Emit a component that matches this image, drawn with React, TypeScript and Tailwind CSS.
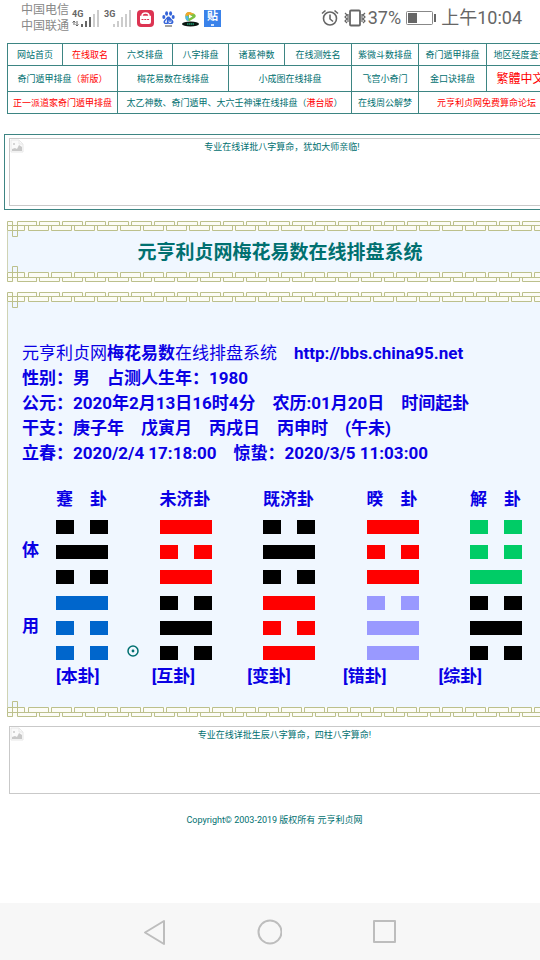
import React from "react";

type NavCell = { parts: { text: string; red?: boolean }[]; span?: number; large?: boolean };

const navRows: { height: string; cells: NavCell[] }[] = [
  {
    height: "h-[22px]",
    cells: [
      { parts: [{ text: "网站首页" }] },
      { parts: [{ text: "在线取名", red: true }] },
      { parts: [{ text: "六爻排盘" }] },
      { parts: [{ text: "八字排盘" }] },
      { parts: [{ text: "诸葛神数" }] },
      { parts: [{ text: "在线测姓名" }] },
      { parts: [{ text: "紫微斗数排盘" }] },
      { parts: [{ text: "奇门遁甲排盘" }] },
      { parts: [{ text: "地区经度查询" }] },
    ],
  },
  {
    height: "h-[26px]",
    cells: [
      { parts: [{ text: "奇门遁甲排盘" }, { text: "（新版）", red: true }], span: 2 },
      { parts: [{ text: "梅花易数在线排盘" }], span: 2 },
      { parts: [{ text: "小成图在线排盘" }], span: 2 },
      { parts: [{ text: "飞宫小奇门" }] },
      { parts: [{ text: "金口诀排盘" }] },
      { parts: [{ text: "繁體中文", red: true }], large: true },
    ],
  },
  {
    height: "h-[22px]",
    cells: [
      { parts: [{ text: "正一派道家奇门遁甲排盘", red: true }], span: 2 },
      {
        parts: [
          { text: "太乙神数、奇门遁甲、大六壬神课在线排盘（" },
          { text: "港台版", red: true },
          { text: "）" },
        ],
        span: 4,
      },
      { parts: [{ text: "在线周公解梦" }] },
      { parts: [{ text: "元亨利贞网免费算命论坛", red: true }], span: 2 },
    ],
  },
];

type Hexagram = { name: string; upper: string; lower: string; lines: string; moving?: boolean };

// Each line reads top to bottom: "1" is a solid line, "0" a broken one.
const hexagrams: Hexagram[] = [
  { name: "蹇　卦", upper: "bg-black", lower: "bg-[#0066cc]", lines: "010100", moving: true },
  { name: "未济卦", upper: "bg-[#ff0000]", lower: "bg-black", lines: "101010" },
  { name: "既济卦", upper: "bg-black", lower: "bg-[#ff0000]", lines: "010101" },
  { name: "暌　卦", upper: "bg-[#ff0000]", lower: "bg-[#9999ff]", lines: "101011" },
  { name: "解　卦", upper: "bg-[#00cc66]", lower: "bg-black", lines: "001010" },
];

const captions = ["[本卦]", "[互卦]", "[变卦]", "[错卦]", "[综卦]"];

function Line({ solid, color }: { solid: boolean; color: string }) {
  if (solid) return <div className={`h-[14px] w-full ${color}`} />;
  return (
    <div className="flex h-[14px] justify-between">
      <div className={`w-[18px] ${color}`} />
      <div className={`w-[18px] ${color}`} />
    </div>
  );
}

function Fret({ id, bottom }: { id: string; bottom?: boolean }) {
  return (
    <div className="h-[10px] bg-[#fcfcf6]">
      <svg
        className={`block h-[10px] w-full overflow-visible ${bottom ? "-scale-y-100" : ""}`}
        fill="none"
        stroke="#bcc08c"
        aria-hidden="true"
      >
        <defs>
          <pattern id={id} x="21" y="0" width="23" height="10" patternUnits="userSpaceOnUse">
            <path d="M11.5 .5h20v4h-20z M-11.5 .5h20v4h-20z M.5 4.5h20v5H.5z" />
          </pattern>
        </defs>
        <rect x="21" width="100%" height="10" fill={`url(#${id})`} stroke="none" />
        <path d="M21 .5h8.500v4H10.500 M.5 .5h5v4h-5z M10.500 .5H21 M.5 4.500v5h17v-5H.5 M5.500 .5v15h5V.500" />
      </svg>
    </div>
  );
}

function Panel({ id, children }: { id: string; children: React.ReactNode }) {
  return (
    <div className="ml-[7px] bg-[#f0f7ff]">
      <Fret id={`${id}-top`} />
      <div className="border-l border-[#cfd3b4]">{children}</div>
      <Fret id={`${id}-bottom`} bottom />
    </div>
  );
}

function MissingBanner({ text }: { text: string }) {
  return (
    <a
      href="#"
      className="grid h-[68px] grid-cols-[14px_1fr_14px] items-start border border-[#c9c9c9] text-center text-[9px] leading-4"
    >
      <svg className="h-[14px] w-[14px]" viewBox="0 0 14 14" aria-hidden="true">
        <path d="M1 1h8l4 4v8H1z" fill="#fafafa" stroke="#e8e8e8" />
        <path d="M9 1v4h4" fill="none" stroke="#e8e8e8" />
        <circle cx="4" cy="5" r="1" fill="#c8c8c8" />
        <path d="M2 12v-2l3-1 2 1 2-4 3 2v4z" fill="#c8c8c8" />
      </svg>
      <span>{text}</span>
    </a>
  );
}

function Signal({ label, strong }: { label: string; strong?: boolean }) {
  const on = "#666";
  const off = "#ccc";
  return (
    <div className="relative h-[17px] w-[27px]">
      <span className="absolute top-0 left-0 text-[9px] leading-[9px] font-bold">{label}</span>
      <svg className="block h-[17px] w-[27px]" viewBox="0 0 27 17" aria-hidden="true">
        {strong && <path d="M2 11v4M.5 12.500 2 11l1.500 1.500M5 11v5M3.500 14.500 5 16l1.500-1.500" fill="none" stroke={on} />}
        <path d="M9 14h2v3H9z" fill={strong ? on : off} />
        <path d="M13 11h2v6h-2z" fill={strong ? on : off} />
        <path d="M17 7h2v10h-2z" fill={strong ? on : off} />
        <path d="M21 4h2v13h-2zM25 0h2v17h-2z" fill={off} />
      </svg>
    </div>
  );
}

function StatusBar() {
  return (
    <header className="flex h-9 items-center justify-between pr-[18px] pl-[21px] text-[#666]">
      <div className="flex items-center">
        <div className="mr-[3px] text-[12px] leading-4 text-[#888]">
          <div>中国电信</div>
          <div>中国联通</div>
        </div>
        <Signal label="4G" strong />
        <span className="w-[5px]" />
        <Signal label="3G" />
        <svg className="ml-[6px] h-[17px] w-[17px]" viewBox="0 0 17 17" aria-hidden="true">
          <rect width="17" height="17" rx="4" fill="#dc3452" />
          <path d="M3 7h11v5q0 2-2 2H5q-2 0-2-2z" fill="#fff" />
          <path d="M3 6.500h11M5 6q0-3 3.500-3T12 6" fill="none" stroke="#fff" strokeWidth="1.500" />
          <path d="M4.500 9.500h8" stroke="#dc3452" strokeDasharray="2 .8" />
        </svg>
        <svg className="ml-[8px] h-[17px] w-[13px]" viewBox="0 0 13 17" fill="#3564d8" aria-hidden="true">
          <ellipse cx="1.800" cy="7" rx="1.500" ry="2" />
          <ellipse cx="4.600" cy="3.500" rx="1.500" ry="2.200" />
          <ellipse cx="8.600" cy="3.500" rx="1.500" ry="2.200" />
          <ellipse cx="11.200" cy="7" rx="1.500" ry="2" />
          <path d="M6.500 6.500c2 0 2 2 3.500 3 2.500 2 1.500 4.500-.5 4.500-1.200 0-2-.3-3-.3s-1.800.3-3 .3c-2 0-3-2.500-.5-4.500 1.500-1 1.500-3 3.500-3z" />
          <path d="M4.500 9.500v3H3.500v-1.500h1M7 10.500v2h2v-2" fill="none" stroke="#fff" strokeWidth=".8" />
          <path d="M3 16h7" stroke="#444" />
        </svg>
        <svg className="ml-[7px] h-[17px] w-[17px]" viewBox="0 0 17 17" aria-hidden="true">
          <path d="M3.500 5.500q0-3.500 4-3.500l5 2q2.500 2 0 4l-5 3q-4 0-4-3.500z" fill="#7cc243" />
          <path d="M3.500 7V5.500q0-3.500 4-3.500l5 2-6 1z" fill="#f5a52b" />
          <path d="M3.500 5.500l3 1v4.500q-3-.5-3-3.500z" fill="#4db8e8" />
          <path d="M7 4.500v4l3.500-2z" fill="#fff" />
          <ellipse cx="8.500" cy="14" rx="8.500" ry="2.500" fill="#0b1712" />
          <path d="M5 14h7" stroke="#1d9a72" strokeWidth="1.500" strokeDasharray="1.500 .5" />
        </svg>
        <div className="ml-[5px] flex h-[17px] w-[17px] flex-col items-center bg-[#3a82ea] text-[11px] leading-[14px] font-bold text-white">
          贴
          <i className="h-[2px] w-[3px] bg-[#cfe2ff]" />
        </div>
      </div>
      <div className="flex items-center text-[18px] leading-6">
        <svg className="h-[18px] w-[18px]" viewBox="0 0 18 18" fill="none" stroke="#666" strokeWidth="1.600" aria-hidden="true">
          <circle cx="9" cy="9.500" r="6.500" />
          <path d="M9 5.500v4.500l3 2.500M1 4.500 4.500 1.500M17 4.500 13.500 1.500" />
        </svg>
        <svg className="ml-[5px] h-[18px] w-[22px]" viewBox="0 0 22 18" fill="none" stroke="#666" strokeWidth="1.800" aria-hidden="true">
          <rect x="6" y="1.500" width="10" height="15" rx="1" />
          <path d="M1 4l2 2-2 2 2 2-2 2 2 2M4 5v8M21 4l-2 2 2 2-2 2 2 2-2 2M18 5v8" strokeWidth="1.200" />
        </svg>
        <span className="ml-[2px]">37%</span>
        <svg className="ml-[5px] h-[16px] w-[30px]" viewBox="0 0 30 16" aria-hidden="true">
          <rect x=".5" y="1.500" width="26" height="13" rx="1" fill="none" stroke="#888" />
          <path d="M2 3h9v10H2zM28 4h2v8h-2z" fill="#666" />
        </svg>
        <span className="ml-[5px]">上午10:04</span>
      </div>
    </header>
  );
}

function NavTable() {
  return (
    <table className="ml-[7px] w-[547px] table-fixed border-collapse text-center text-[9px] leading-3">
      <colgroup>
        <col className="w-[55px]" />
        <col className="w-[55px]" />
        <col className="w-[55px]" />
        <col className="w-[56px]" />
        <col className="w-[56px]" />
        <col className="w-[67px]" />
        <col className="w-[67px]" />
        <col className="w-[68px]" />
        <col className="w-[68px]" />
      </colgroup>
      <tbody>
        {navRows.map((row, r) => (
          <tr key={r} className={row.height}>
            {row.cells.map((cell, c) => (
              <td
                key={c}
                colSpan={cell.span}
                className={`border border-[#3d8583] p-0 whitespace-nowrap ${cell.large ? "text-[12px]" : ""}`}
              >
                <a href="#">
                  {cell.parts.map((p, i) => (
                    <span key={i} className={p.red ? "text-[#ff0000]" : ""}>
                      {p.text}
                    </span>
                  ))}
                </a>
              </td>
            ))}
          </tr>
        ))}
      </tbody>
    </table>
  );
}

function Reading() {
  return (
    <section className="pt-[39px] pb-[18px] pl-[14px] text-[17px] leading-[25px] font-bold whitespace-nowrap text-[#0a00e4]">
      <p>
        <span className="font-normal">元亨利贞网</span>梅花易数
        <span className="font-normal">在线排盘系统</span>
        {"\u3000"}
        <a href="#">http://bbs.china95.net</a>
      </p>
      <p>性别：男　占测人生年：1980</p>
      <p>公元：2020年2月13日16时4分　农历:01月20日　时间起卦</p>
      <p>干支：庚子年　戊寅月　丙戌日　丙申时　(午未)</p>
      <p>立春：2020/2/4 17:18:00　惊蛰：2020/3/5 11:03:00</p>

      <div className="mt-[21px] flex items-end">
        <div className="flex h-[140px] w-[34px] flex-col gap-[51px] pt-[18px]">
          <span>体</span>
          <span>用</span>
        </div>
        <div className="flex w-[466px] justify-between">
          {hexagrams.map((h) => (
            <div key={h.name} className="relative w-[52px]">
              <div>{h.name}</div>
              <div className="mt-2 flex h-[140px] flex-col justify-between">
                {h.lines.split("").map((l, i) => (
                  <Line key={i} solid={l === "1"} color={i < 3 ? h.upper : h.lower} />
                ))}
              </div>
              {h.moving && (
                <svg
                  className="absolute bottom-[3px] left-[71px] h-[12px] w-[12px]"
                  viewBox="0 0 12 12"
                  role="img"
                  aria-label="⊙"
                >
                  <circle cx="6" cy="6" r="5" fill="none" stroke="#007070" strokeWidth="1.500" />
                  <circle cx="6" cy="6" r="1.400" fill="#007070" />
                </svg>
              )}
            </div>
          ))}
        </div>
      </div>
      <div className="mt-1 ml-[34px] flex w-[426px] justify-between">
        {captions.map((c) => (
          <span key={c}>{c}</span>
        ))}
      </div>
    </section>
  );
}

export default function App() {
  return (
    <div
      lang="zh-CN"
      className="flex min-h-screen flex-col overflow-hidden bg-white font-[Roboto,'Noto_Sans_CJK_SC',sans-serif] text-[#007070]"
    >
      <StatusBar />
      <main className="w-full min-w-[560px] flex-1 pt-[7px]">
        <NavTable />
        <div className="mt-[20px] ml-[4px] border border-[#3d8583] px-1 py-[3px]">
          <MissingBanner text="专业在线详批八字算命，犹如大师亲临!" />
        </div>
        <div className="mt-[11px]">
          <Panel id="title">
            <h1 className="w-[544px] pt-[7px] pb-[5px] text-center text-[19px] leading-[29px] font-bold">
              元亨利贞网梅花易数在线排盘系统
            </h1>
          </Panel>
        </div>
        <div className="mt-[10px]">
          <Panel id="reading">
            <Reading />
          </Panel>
        </div>
        <div className="mt-[9px] ml-[9px]">
          <MissingBanner text="专业在线详批生辰八字算命，四柱八字算命!" />
        </div>
        <p className="mt-[18px] w-[549px] text-center text-[9px] leading-4">Copyright© 2003-2019 版权所有 元亨利贞网</p>
      </main>
      <nav className="flex h-[57px] items-center justify-between bg-[#f7f7f7] px-[142px]">
        <button aria-label="返回">
          <svg className="block h-[26px] w-[24px]" viewBox="0 0 24 26" fill="none" stroke="#bdbdbd" strokeWidth="2" strokeLinejoin="round" aria-hidden="true">
            <path d="M22 2v23L3 13.500z" />
          </svg>
        </button>
        <button aria-label="主屏幕">
          <svg className="block h-[26px] w-[26px]" viewBox="0 0 26 26" fill="none" stroke="#bdbdbd" strokeWidth="2" aria-hidden="true">
            <circle cx="14" cy="13" r="11.500" />
          </svg>
        </button>
        <button aria-label="最近任务">
          <svg className="block h-[26px] w-[26px]" viewBox="0 0 26 26" fill="none" stroke="#bdbdbd" strokeWidth="2" strokeLinejoin="round" aria-hidden="true">
            <rect x="2" y="2" width="21" height="21" />
          </svg>
        </button>
      </nav>
    </div>
  );
}
